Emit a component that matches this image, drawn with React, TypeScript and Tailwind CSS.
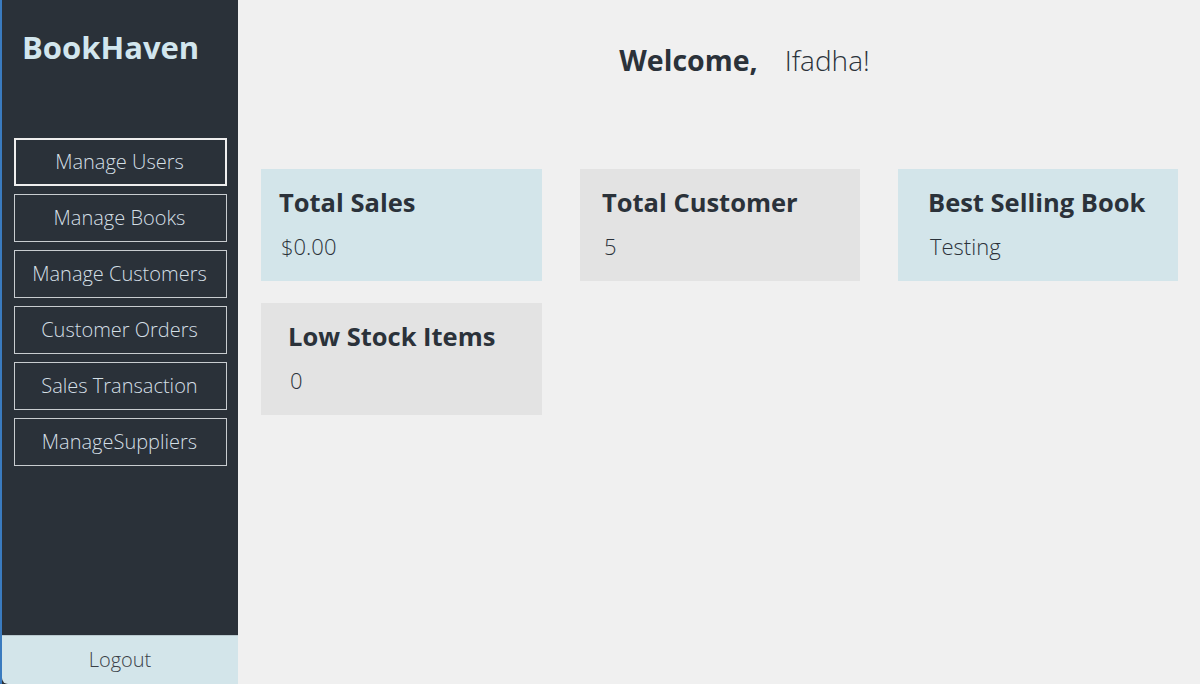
const navItems = [
  'Manage Users',
  'Manage Books',
  'Manage Customers',
  'Customer Orders',
  'Sales Transaction',
  'ManageSuppliers',
]

const stats = [
  { title: 'Total Sales', value: '$0.00', bg: 'bg-[#d3e5ea]', pad: 'pl-[18px]' },
  { title: 'Total Customer', value: '5', bg: 'bg-[#e3e3e3]', pad: 'pl-[22px]' },
  { title: 'Best Selling Book', value: 'Testing', bg: 'bg-[#d3e5ea]', pad: 'pl-[30px]' },
  { title: 'Low Stock Items', value: '0', bg: 'bg-[#e3e3e3]', pad: 'pl-[27px]' },
]

export default function App() {
  return (
    <div className="flex h-[684px] w-[1200px] overflow-hidden bg-[#f0f0f0] font-['Open_Sans',sans-serif] text-[#2b323a]">
      <aside className="flex w-[238px] shrink-0 flex-col border-l-2 border-[#3a7bbf] bg-[#2a3139]">
        <h1 className="pl-[20px] pt-[27px] text-[31px] leading-[40px] font-bold text-[#d2e6ee]">BookHaven</h1>

        <nav className="mt-[71px] flex flex-col gap-[8px] pl-[12px] pr-[10px]">
          {navItems.map((item, i) => (
            <button
              key={item}
              className={
                i === 0
                  ? 'h-[48px] w-[213px] border-2 border-[#eeeeee] pr-[2px] text-[20px] font-light text-[#d3dfe5]'
                  : 'h-[48px] w-[213px] border-[1.5px] border-[#c8ccd0] pr-[2px] text-[20px] font-light text-[#d3dfe5]'
              }
            >
              {item}
            </button>
          ))}
        </nav>

        <button className="mt-auto h-[49px] rounded-bl-[6px] border-t border-[#b8c8ce] bg-[#d3e5ea] text-[20px] font-light text-[#3a4148]">
          Logout
        </button>
      </aside>

      <main className="flex-1 pl-[23px]">
        <div className="flex items-baseline justify-center pt-[39px] pl-[28px]">
          <span className="text-[28.5px] font-bold">Welcome,</span>
          <span className="ml-[27px] text-[28px] font-light">Ifadha!</span>
        </div>

        <div className="mt-[87px] grid grid-cols-[281px_280px_280px] gap-x-[38px] gap-y-[22px]">
          {stats.map((s) => (
            <div key={s.title} className={`h-[112px] ${s.bg} ${s.pad} pt-[16px]`}>
              <div className="text-[25.5px] leading-[34px] font-bold">{s.title}</div>
              <div className="mt-[12px] pl-[2px] text-[22px] leading-[30px] font-light">{s.value}</div>
            </div>
          ))}
        </div>
      </main>
    </div>
  )
}
